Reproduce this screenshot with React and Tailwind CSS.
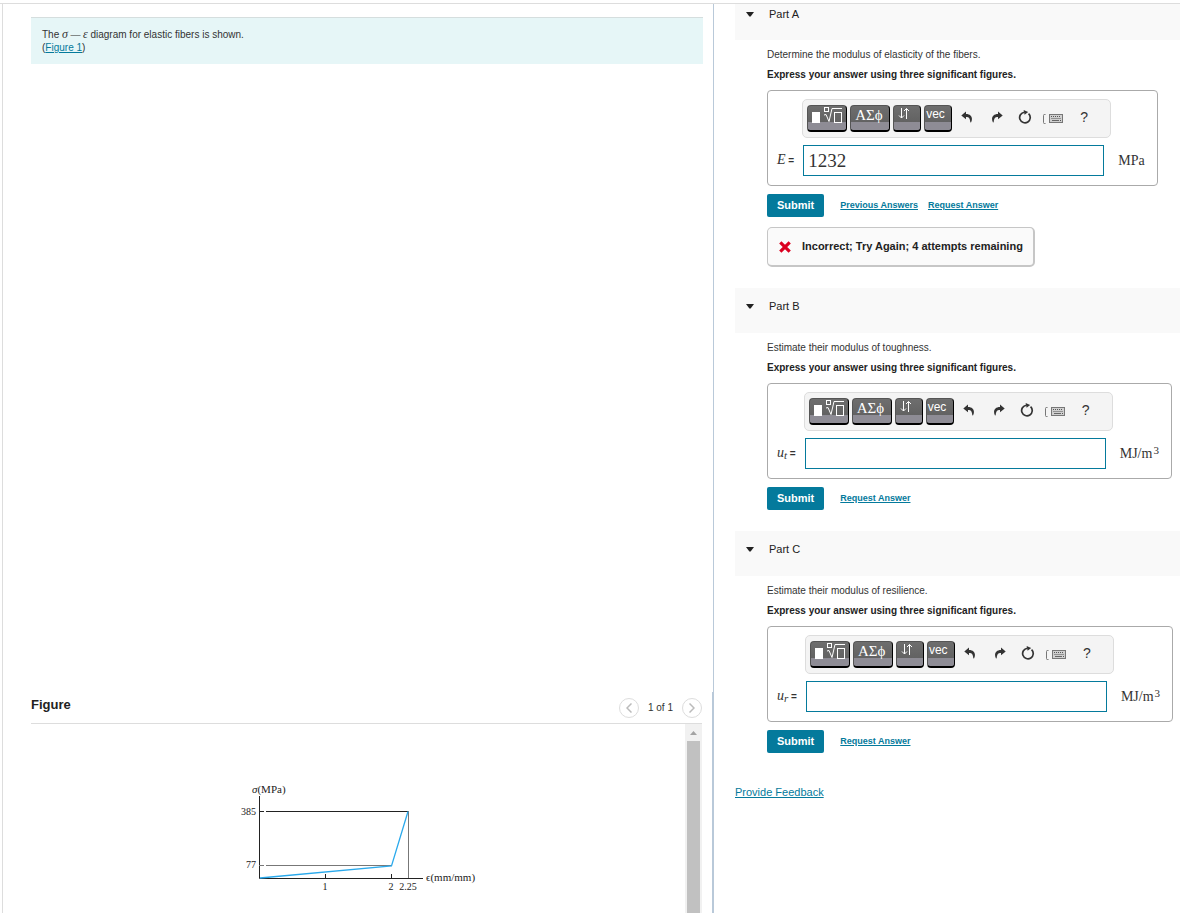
import React from "react";

const linkClass = "text-[#047a9c] underline";

function UndoIcon({ flip }) {
  return (
    <svg viewBox="0 0 12 12" className={flip ? "h-3 w-3 -scale-x-100" : "h-3 w-3"} fill="#333" aria-hidden="true">
      <path d="M5 0.5 L0.3 4.4 L5 8.2 V6 C7.6 5.9 9 7 9.3 11.2 L10 11.6 C12.2 7.4 10.6 2.9 5 2.9 Z" />
    </svg>
  );
}

function ResetIcon() {
  return (
    <svg viewBox="0 0 14 14" className="h-[14px] w-[14px]" fill="none" aria-hidden="true">
      <path d="M10 3.2 A5.3 5.3 0 1 1 5.6 2.4" stroke="#333" strokeWidth="1.7" transform="rotate(8 7 7.5)" />
      <path d="M5.6 0 L10.2 2 L6.6 4.8 Z" fill="#333" />
    </svg>
  );
}

function KeyboardIcon() {
  return (
    <svg viewBox="0 0 20 10" className="h-[10px] w-5" fill="none" aria-hidden="true">
      <path d="M2.5 0.5 H1.2 Q0.5 0.5 0.5 1.5 V8.5 Q0.5 9.5 1.2 9.5 H2.5" stroke="#777" />
      <rect x="6.5" y="0.5" width="13" height="8" fill="#d0d0d0" stroke="#777" />
      <path d="M8 2.5 H18 M8.5 4.5 H18" stroke="#555" strokeDasharray="1 1" />
      <path d="M9 6.5 H16" stroke="#666" />
      <path d="M17 6.5 H18" stroke="#555" />
    </svg>
  );
}

function RootIcon() {
  return (
    <svg viewBox="0 0 32 18" className="h-[18px] w-8" fill="none" aria-hidden="true">
      <rect x="0" y="6" width="8" height="11" fill="#fff" />
      <path d="M12 9 L14 8.5 L17 15.5 L20 2.5 H30" stroke="#fff" />
      <rect x="12.5" y="1.5" width="4" height="4" stroke="#fff" />
      <rect x="22.5" y="6.5" width="7" height="10" stroke="#fff" />
    </svg>
  );
}

function ArrowsIcon() {
  return (
    <svg viewBox="0 0 12 14" className="h-[14px] w-3" fill="none" stroke="#fff" aria-hidden="true">
      <path d="M3.5 1 V11 M1 8.5 L3.5 11 L6 8.5" />
      <path d="M8.5 12 V1.5 M6 4 L8.5 1.5 L11 4" />
    </svg>
  );
}

const keyClass =
  "flex h-[27px] items-start rounded border border-[#555] border-r-black border-b-2 border-b-black bg-linear-to-b from-[#6e6e6e] from-0% via-[#626262] via-67% to-[#8e8c95] to-68% text-white overflow-hidden";

function Toolbar() {
  return (
    <div className="col-span-2 col-start-2 flex h-[39px] w-[309px] items-center rounded-[5px] border border-[#ddd] bg-[#f4f4f4] pl-1">
      <div className="flex gap-[3px] pb-px">
        <button type="button" aria-label="Templates" className={keyClass + " w-10 pl-1"}><RootIcon /></button>
        <button type="button" aria-label="Symbols" className={keyClass + " w-10 justify-start pl-1 font-['Liberation_Serif',serif] text-[15px] leading-[18px]"}>ΑΣϕ</button>
        <button type="button" aria-label="Subscripts" className={keyClass + " w-7 pt-px pl-1"}><ArrowsIcon /></button>
        <button type="button" className={keyClass + " w-7 pl-px text-xs leading-4"}>vec</button>
      </div>
      <div className="grid grid-cols-[30px_30px_26px_30px_32px] place-items-center pb-[3px]">
        <button type="button" aria-label="Undo"><UndoIcon /></button>
        <button type="button" aria-label="Redo"><UndoIcon flip /></button>
        <button type="button" aria-label="Reset"><ResetIcon /></button>
        <button type="button" aria-label="Keyboard shortcuts" className="pt-1"><KeyboardIcon /></button>
        <button type="button" className="text-sm leading-4 text-[#333]">?</button>
      </div>
    </div>
  );
}

function Part({ id, first, question, symbol, sub, value, unit, power, previous, children }) {
  return (
    <section>
      <h2
        className={
          (first ? "pt-[2px] pb-[18px]" : "pt-[10px] pb-[19px]") +
          " flex items-center gap-[15px] bg-[#f9f9f9] pl-[11px] text-[11px] leading-4 text-[#222]"
        }
      >
        <svg viewBox="0 0 8 5" className="h-[5px] w-2" fill="#222" aria-hidden="true">
          <path d="M0 0 H8 L4.6 4.4 H3.4 Z" />
        </svg>
        Part {id}
      </h2>
      <div className="flex flex-col items-start pt-[9px] pl-8">
        <p className="text-[10px] leading-3">{question}</p>
        <p className="mt-2 text-[10px] leading-3 font-bold text-[#222]">Express your answer using three significant figures.</p>
        <div className="mt-[9px] grid grid-cols-[auto_302px_auto] items-center gap-y-[7px] rounded border border-[#aaa] pt-2 pr-3 pb-[9px] pl-[9px]">
          <Toolbar />
          <label htmlFor={"answer-" + id} className="pr-2 font-['Liberation_Serif',serif] text-sm leading-4 whitespace-nowrap">
            <i>{symbol}</i>
            {sub && <sub className="-bottom-[2px] text-[11px] italic">{sub}</sub>}
            <span className="font-['Liberation_Sans',sans-serif] text-[10px] font-bold"> =</span>
          </label>
          <input
            id={"answer-" + id}
            type="text"
            defaultValue={value}
            className="ml-px h-[31px] w-[301px] border border-[#047a9c] bg-white px-1 font-['Liberation_Serif',serif] text-[19px] text-[#333]"
          />
          <span className="pl-[14px] font-['Liberation_Serif',serif] text-sm leading-4">
            {unit}
            {power && <sup className="-top-1 pl-px text-[11px]">{power}</sup>}
          </span>
        </div>
        <div className="mt-2 flex items-center">
          <button type="submit" className="h-[23px] rounded-xs bg-[#047a9c] px-[10px] text-[11px] font-bold text-white">Submit</button>
          <div className="flex gap-[10px] pl-4 text-[9px] font-bold">
            {previous && <a href="#previous" className={linkClass}>Previous Answers</a>}
            <a href="#request" className={linkClass}>Request Answer</a>
          </div>
        </div>
        {children}
      </div>
    </section>
  );
}

function StressStrainChart() {
  return (
    <svg viewBox="0 0 260 120" className="h-[120px] w-[260px]" role="img" aria-label="Stress strain diagram">
      <g fill="none" stroke="#222">
        <path d="M23.5 16 V98.5 H187" />
        <path d="M23 31.5 H28 M30 31.5 H172" />
        <path d="M23 85.5 H28 M30 85.5 H155" stroke="#777" />
        <path d="M172.5 31 V98" stroke="#777" />
        <path d="M89.5 94 V99 M155.5 94 V99" />
        <path d="M24 98 L155.500 86 L172 31.500" stroke="#29a9ec" strokeWidth="1.300" />
      </g>
      <g fill="#222" className="font-['Liberation_Serif',serif] text-[10px]">
        <text x="16" y="13" className="text-[11px]"><tspan fontStyle="italic">σ</tspan>(MPa)</text>
        <text x="20" y="35" textAnchor="end">385</text>
        <text x="20" y="88" textAnchor="end">77</text>
        <text x="89" y="110" textAnchor="middle">1</text>
        <text x="155" y="110" textAnchor="middle">2</text>
        <text x="172" y="110" textAnchor="middle">2.25</text>
        <text x="190" y="101" className="text-[11px]">ϵ(mm/mm)</text>
      </g>
    </svg>
  );
}

function Pager() {
  const round = "flex h-5 w-5 items-center justify-center rounded-full border border-[#ddd]";
  return (
    <div className="flex items-center gap-[9px] text-[10px] text-[#333]">
      <button type="button" aria-label="Previous figure" className={round}>
        <svg viewBox="0 0 6 10" className="h-[10px] w-[6px]" fill="none" stroke="#bbb" strokeWidth="1.500"><path d="M5.500 0.500 L1 5 L5.500 9.500" /></svg>
      </button>
      1 of 1
      <button type="button" aria-label="Next figure" className={round}>
        <svg viewBox="0 0 6 10" className="h-[10px] w-[6px]" fill="none" stroke="#bbb" strokeWidth="1.500"><path d="M0.500 0.500 L5 5 L0.500 9.500" /></svg>
      </button>
    </div>
  );
}

export default function App() {
  return (
    <div className="h-screen overflow-hidden bg-white pt-[3px] font-['Liberation_Sans',sans-serif] text-[#333]">
      <div className="grid h-full grid-cols-[minmax(0,1fr)_466px] border-t border-[#ddd] pl-[2px]">
        <main className="flex min-h-0 flex-col border-r border-l border-r-[#b9c9d9] border-l-[#ddd]">
          <div className="mt-[13px] mr-[10px] ml-7 border-t border-[#d5dede] bg-[#e6f6f7] pt-[10px] pb-[10px] pl-[11px] text-[10px] leading-[13px]">
            <p>
              The <i className="font-['Liberation_Serif',serif] text-xs leading-[13px]">σ</i>
              <span className="font-['Liberation_Serif',serif]"> — </span>
              <i className="font-['Liberation_Serif',serif] text-xs leading-[13px]">ε</i> diagram for elastic fibers is shown.
            </p>
            <p>(<a href="#figure" className={linkClass}>Figure 1</a>)</p>
          </div>
          <section id="figure" className="mt-auto flex h-[221px] flex-col border-r border-[#b9c9d9] pr-[10px] pl-7">
            <header className="flex h-8 items-center justify-between border-b border-[#ddd]">
              <h2 className="pb-[6px] text-[13px] leading-4 font-bold text-[#222]">Figure</h2>
              <Pager />
            </header>
            <div className="flex min-h-0 flex-1">
              <div className="flex-1 pt-[56px] pl-[205px]"><StressStrainChart /></div>
              <div className="flex w-[17px] flex-col items-center bg-[#f1f1f1]">
                <svg viewBox="0 0 17 17" className="h-[17px] w-[17px] shrink-0" fill="#a3a3a3" aria-hidden="true"><path d="M5 11 L8.500 7 L12 11 Z" /></svg>
                <div className="w-[13px] flex-1 bg-[#c1c1c1]" />
              </div>
            </div>
          </section>
        </main>
        <aside className="flex flex-col gap-[21px] pl-[21px]">
          <Part id="A" first previous question="Determine the modulus of elasticity of the fibers." symbol="E" value="1232" unit="MPa">
            <p className="mt-[10px] flex h-10 items-center gap-[11px] rounded-[5px] border border-r-2 border-b-2 border-[#c6c6c6] bg-[#fafafa] pr-[10px] pl-[11px] text-[11px] font-bold text-[#222]">
              <svg viewBox="0 0 12 12" className="h-3 w-3" stroke="#db0020" strokeWidth="3.200" aria-hidden="true"><path d="M1.300 1.300 L10.700 10.700 M10.700 1.300 L1.300 10.700" /></svg>
              Incorrect; Try Again; 4 attempts remaining
            </p>
          </Part>
          <Part id="B" question="Estimate their modulus of toughness." symbol="u" sub="t" value="" unit="MJ/m" power="3" />
          <Part id="C" question="Estimate their modulus of resilience." symbol="u" sub="r" value="" unit="MJ/m" power="3" />
          <a href="#feedback" className={linkClass + " mt-[10px] self-start text-[11px] leading-4"}>Provide Feedback</a>
        </aside>
      </div>
    </div>
  );
}
